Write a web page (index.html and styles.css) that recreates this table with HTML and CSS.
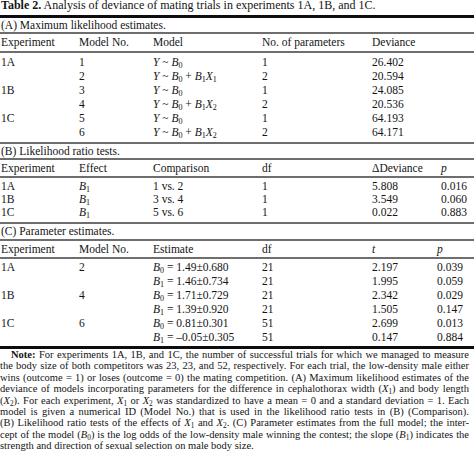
FILE: index.html
```html
<!DOCTYPE html>
<html>
<head>
<meta charset="utf-8">
<link rel="stylesheet" href="styles.css">
</head>
<body>
<div class="page">
  <div class="title"><b>Table 2.</b> Analysis of deviance of mating trials in experiments 1A, 1B, and 1C.</div>
  <div class="rule-thick"></div>

  <div class="sec-title">(A) Maximum likelihood estimates.</div>
  <div class="rule"></div>
  <div class="grid cols-a head head-a">
    <span>Experiment</span><span>Model No.</span><span>Model</span><span>No. of parameters</span><span>Deviance</span>
  </div>
  <div class="rule"></div>
  <div class="grid cols-a body body-a">
    <span>1A</span><span>1</span><span><i>Y</i> ~ <i>B</i><sub>0</sub></span><span>1</span><span>26.402</span>
    <span></span><span>2</span><span><i>Y</i> ~ <i>B</i><sub>0</sub> + <i>B</i><sub>1</sub><i>X</i><sub>1</sub></span><span>2</span><span>20.594</span>
    <span>1B</span><span>3</span><span><i>Y</i> ~ <i>B</i><sub>0</sub></span><span>1</span><span>24.085</span>
    <span></span><span>4</span><span><i>Y</i> ~ <i>B</i><sub>0</sub> + <i>B</i><sub>1</sub><i>X</i><sub>2</sub></span><span>2</span><span>20.536</span>
    <span>1C</span><span>5</span><span><i>Y</i> ~ <i>B</i><sub>0</sub></span><span>1</span><span>64.193</span>
    <span></span><span>6</span><span><i>Y</i> ~ <i>B</i><sub>0</sub> + <i>B</i><sub>1</sub><i>X</i><sub>2</sub></span><span>2</span><span>64.171</span>
  </div>
  <div class="rule"></div>

  <div class="sec-title">(B) Likelihood ratio tests.</div>
  <div class="rule"></div>
  <div class="grid cols-b head">
    <span>Experiment</span><span>Effect</span><span>Comparison</span><span>df</span><span>&Delta;Deviance</span><span><i>p</i></span>
  </div>
  <div class="rule"></div>
  <div class="grid cols-b body body-b">
    <span>1A</span><span><i>B</i><sub>1</sub></span><span>1 vs. 2</span><span>1</span><span>5.808</span><span>0.016</span>
    <span>1B</span><span><i>B</i><sub>1</sub></span><span>3 vs. 4</span><span>1</span><span>3.549</span><span>0.060</span>
    <span>1C</span><span><i>B</i><sub>1</sub></span><span>5 vs. 6</span><span>1</span><span>0.022</span><span>0.883</span>
  </div>
  <div class="rule"></div>

  <div class="sec-title sec-title-c">(C) Parameter estimates.</div>
  <div class="rule"></div>
  <div class="grid cols-c head">
    <span>Experiment</span><span>Model No.</span><span>Estimate</span><span>df</span><span><i>t</i></span><span><i>p</i></span>
  </div>
  <div class="rule"></div>
  <div class="grid cols-c body body-c">
    <span>1A</span><span>2</span><span><i>B</i><sub>0</sub> = 1.49±0.680</span><span>21</span><span>2.197</span><span>0.039</span>
    <span></span><span></span><span><i>B</i><sub>1</sub> = 1.46±0.734</span><span>21</span><span>1.995</span><span>0.059</span>
    <span>1B</span><span>4</span><span><i>B</i><sub>0</sub> = 1.71±0.729</span><span>21</span><span>2.342</span><span>0.029</span>
    <span></span><span></span><span><i>B</i><sub>1</sub> = 1.39±0.920</span><span>21</span><span>1.505</span><span>0.147</span>
    <span>1C</span><span>6</span><span><i>B</i><sub>0</sub> = 0.81±0.301</span><span>51</span><span>2.699</span><span>0.013</span>
    <span></span><span></span><span><i>B</i><sub>1</sub> = –0.05±0.305</span><span>51</span><span>0.147</span><span>0.884</span>
  </div>
  <div class="rule-thick"></div>

  <div class="note">
    <span class="ln first"><b>Note:</b> For experiments 1A, 1B, and 1C, the number of successful trials for which we managed to measure</span>
    <span class="ln">the body size of both competitors was 23, 23, and 52, respectively. For each trial, the low-density male either</span>
    <span class="ln">wins (outcome = 1) or loses (outcome = 0) the mating competition. (A) Maximum likelihood estimates of the</span>
    <span class="ln">deviance of models incorporating parameters for the difference in cephalothorax width (<i>X</i><sub>1</sub>) and body length</span>
    <span class="ln">(<i>X</i><sub>2</sub>). For each experiment, <i>X</i><sub>1</sub> or <i>X</i><sub>2</sub> was standardized to have a mean = 0 and a standard deviation = 1. Each</span>
    <span class="ln">model is given a numerical ID (Model No.) that is used in the likelihood ratio tests in (B) (Comparison).</span>
    <span class="ln">(B) Likelihood ratio tests of the effects of <i>X</i><sub>1</sub> and <i>X</i><sub>2</sub>. (C) Parameter estimates from the full model; the inter-</span>
    <span class="ln">cept of the model (<i>B</i><sub>0</sub>) is the log odds of the low-density male winning the contest; the slope (<i>B</i><sub>1</sub>) indicates the</span>
    <span class="ln last">strength and direction of sexual selection on male body size.</span>
  </div>
</div>
</body>
</html>
```

FILE: styles.css
```css
html, body {
  margin: 0;
  padding: 0;
  background: #ffffff;
}

.page {
  width: 474px;
  height: 456px;
  overflow: hidden;
  font-family: "Liberation Serif", "Times New Roman", serif;
  color: #141414;
  font-size: 11.5px;
}

.title {
  height: 15px;
  line-height: 10px;
  font-size: 12px;
  padding-left: 1px;
  white-space: nowrap;
}

.rule-thick {
  height: 3px;
  background: #0d0d0d;
}

.rule {
  height: 2px;
  background: #6e6e6e;
}

.sec-title {
  height: 14px;
  line-height: 14px;
  padding-left: 1px;
}

.sec-title-c {
  height: 15px;
  line-height: 15px;
}

.grid {
  display: grid;
  padding-left: 1px;
}

.cols-a {
  grid-template-columns: 78px 74px 109px 110px 1fr;
}

.cols-b {
  grid-template-columns: 78px 74px 109px 110px 69px 1fr;
}

.cols-c {
  grid-template-columns: 78px 74px 109px 110px 65px 1fr;
}

.grid span {
  white-space: nowrap;
}

.head {
  height: 16px;
  line-height: 16px;
}

.head-a {
  height: 17px;
  line-height: 17px;
}

.body {
  line-height: 14px;
}

.body-a {
  padding-top: 2px;
  padding-bottom: 3px;
}

.body-b {
  line-height: 13px;
  padding-top: 2px;
  padding-bottom: 3px;
}

.body-c {
  padding-top: 1px;
  padding-bottom: 2px;
}

sub {
  font-size: 70%;
  vertical-align: -0.3em;
  line-height: 0;
}

.note {
  font-size: 10.5px;
  line-height: 11.4px;
  width: 469px;
}

.ln {
  display: block;
  text-align: justify;
  text-align-last: justify;
  white-space: nowrap;
}

.ln.first {
  padding-left: 11px;
}

.ln.last {
  text-align-last: left;
}
```
